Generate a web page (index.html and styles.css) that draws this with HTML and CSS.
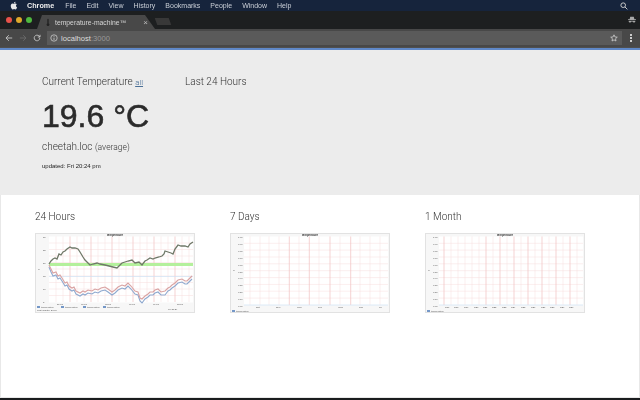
FILE: index.html
```html
<!DOCTYPE html>
<html lang="en">
<head>
    <meta charset="UTF-8">
    <title>temperature-machine™</title>
    <link rel="stylesheet" href="styles.css">
</head>
<body>
<div class="menubar">
    <svg class="apple" viewBox="0 0 14 16"><path d="M10.6 8.5c0-1.700 1.400-2.500 1.500-2.600-.8-1.200-2.100-1.300-2.500-1.400-1.100-.1-2.100.6-2.600.6-.6 0-1.400-.6-2.300-.6C3.500 4.500 2.400 5.200 1.800 6.200.6 8.400 1.500 11.600 2.700 13.300c.6.800 1.300 1.800 2.200 1.700.9 0 1.200-.6 2.300-.6s1.400.6 2.300.5c1 0 1.600-.8 2.100-1.700.7-1 1-1.900 1-2-.1 0-2-.8-2-2.700zM8.900 3.400c.5-.6.800-1.400.7-2.200-.7 0-1.500.5-2 1-.4.500-.8 1.300-.7 2.100.8.100 1.500-.4 2-.9z"/></svg>
    <b class="menu-app">Chrome</b>
    <span>File</span>
    <span>Edit</span>
    <span>View</span>
    <span>History</span>
    <span>Bookmarks</span>
    <span>People</span>
    <span>Window</span>
    <span>Help</span>
    <svg class="search-icon" viewBox="0 0 10 10"><circle cx="4" cy="4" r="2.900"/><path d="M6.200 6.200L9.200 9.200"/></svg>
</div>
<div class="tabstrip">
    <div class="lights">
        <i class="light red"></i>
        <i class="light yellow"></i>
        <i class="light green"></i>
    </div>
    <div class="tab">
        <svg class="favicon" viewBox="0 0 6 12"><path d="M2 1.500a1 1 0 0 1 2 0V7.500a2 2 0 1 1-2 0z"/></svg>
        <span class="tab-title">temperature-machine™</span>
        <span class="tab-close">×</span>
    </div>
    <div class="newtab"></div>
    <svg class="incognito" viewBox="0 0 10 10"><path d="M2.800 1h4.400l.8 3H10v1H0V4h2zM.8 6h8.400v.6a1.800 1.800 0 0 1-3.500.4H4.300a1.800 1.800 0 0 1-3.500-.4z"/></svg>
</div>
<div class="toolbar">
    <svg class="nav-icon" viewBox="0 0 10 10"><path d="M9 5H1.500M4.800 1.500L1.200 5l3.600 3.500"/></svg>
    <svg class="nav-icon dim" viewBox="0 0 10 10"><path d="M1 5h7.500M5.200 1.500L8.800 5 5.200 8.500"/></svg>
    <svg class="nav-icon" viewBox="0 0 10 10"><path d="M8.500 5a3.500 3.500 0 1 1-1-2.500L8.800 3.800M8.800 1v2.800H6"/></svg>
    <div class="omnibox">
        <svg class="info-icon" viewBox="0 0 10 10"><circle cx="5" cy="5" r="4"/><path d="M5 4.500V7.500M5 2.500v1"/></svg>
        <span class="url">localhost<span class="url-port">:3000</span></span>
        <svg class="star" viewBox="0 0 10 10"><path d="M5 1l1.200 2.700 2.900.3-2.200 1.900.6 2.900L5 7.300 2.500 8.800l.6-2.900L.9 4l2.900-.3z"/></svg>
    </div>
    <div class="dots"><i></i><i></i><i></i></div>
</div>
<div class="page">
    <section class="hero">
        <div class="hero-current">
            <h3 class="hero-label">Current Temperature <a class="all-link" href="#">all</a></h3>
            <div class="temperature">19.6 °C</div>
            <div class="host">cheetah.loc <small>(average)</small></div>
            <div class="updated">updated: Fri 20:24 pm</div>
        </div>
        <h3 class="hero-label">Last 24 Hours</h3>
    </section>
    <section class="charts">
        <div class="chart-col">
            <h3 class="chart-title">24 Hours</h3>
            <svg class="chart" viewBox="0 0 160 80">
                <rect class="plot" x="14" y="3.500" width="144" height="66"/>
                <path class="grid" d="M14 10H158M14 16.500H158M14 23H158M14 29.500H158M14 36H158M14 43H158M14 49.500H158M14 56H158M14 62.500H158M21 3.500V69M28 3.500V69M42 3.500V69M49 3.500V69M63 3.500V69M70 3.500V69M84 3.500V69M91 3.500V69M105 3.500V69M112 3.500V69M126 3.500V69M133 3.500V69M147 3.500V69M154 3.500V69"/>
                <path class="grid-major" d="M35 3.500V69M56 3.500V69M77 3.500V69M98 3.500V69M119 3.500V69M140 3.500V69"/>
                <rect class="band" x="14" y="30" width="144" height="3"/>
                <path class="zero" d="M14 43.500H158"/>
                <polyline class="line-blue" points="14,34 16,39 18,43 21,42 23,46 25,45 27,48 30,53 32,52 34,56 37,58 39,57 41,61 45,63 48,61 50,62 53,60 57,61 60,59 63,60 66,58 70,57 73,59 77,62 80,60 83,57 87,55 90,56 93,53 96,56 100,61 103,62 105,68 107,70 110,66 113,64 115,62 118,62 120,60 123,59 126,62 130,62 133,58 135,57 137,55 140,53 143,50 147,49 150,51 152,51 155,48 157,46"/>
                <polyline class="line-red" points="14,32 16,36 18,40 21,39 23,43 25,42 27,45 30,50 32,49 34,53 37,55 39,54 41,58 45,60 48,58 50,59 53,57 57,58 60,56 63,57 66,55 70,54 73,56 77,59 80,57 83,54 87,52 90,53 93,50 96,53 100,58 103,59 105,65 107,66 110,63 113,61 115,59 118,59 120,57 123,56 126,59 130,58 133,55 135,54 137,52 140,50 143,47 147,46 150,48 152,48 155,45 157,43"/>
                <polyline class="line-dark" points="14,31 16,28 18,26 20,25 22,26 24,21 26,22 28,19 30,18 32,16 35,14 37,15 40,15 43,16 45,19 48,24 50,27 53,30 55,32 58,31 62,30 65,31 70,32 74,33 78,34 82,35 85,32 87,30 90,29 93,28 97,27 100,30 104,29 107,32 110,28 112,27 115,25 118,26 120,25 124,24 127,23 129,21 130,18 133,19 136,20 138,21 140,16 143,12 146,13 150,13 153,14 155,11 158,9"/>
                <text class="chart-name" x="80" y="2.800">temperature</text>
                <text class="tick" x="2" y="37">°C</text>
                <text class="tick" x="8" y="5">30</text>
                <text class="tick" x="8" y="18">25</text>
                <text class="tick" x="8" y="31">20</text>
                <text class="tick" x="8" y="44">15</text>
                <text class="tick" x="8" y="57">10</text>
                <text class="tick" x="8" y="70">5</text>
                <text class="tick" x="22" y="72">21:00</text>
                <text class="tick" x="46" y="72">00:00</text>
                <text class="tick" x="70" y="72">03:00</text>
                <text class="tick" x="94" y="72">06:00</text>
                <text class="tick" x="118" y="72">09:00</text>
                <text class="tick" x="142" y="72">12:00</text>
                <path class="legend" d="M2 74h3M26 74h3M48 74h3M68 74h3"/>
                <text class="tick" x="6" y="75">temperature</text>
                <text class="tick" x="30" y="75">temperature</text>
                <text class="tick" x="52" y="75">temperature</text>
                <text class="tick" x="72" y="75">temperature</text>
                <text class="tick" x="2" y="78">Last update: 20:24</text>
                <text class="tick" x="133" y="77">Fri 20:24</text>
            </svg>
        </div>
        <div class="chart-col">
            <h3 class="chart-title">7 Days</h3>
            <svg class="chart" viewBox="0 0 160 80">
                <rect class="plot" x="14" y="3.500" width="144" height="68.500"/>
                <path class="grid" d="M14 10.300H158M14 17.100H158M14 24H158M14 30.800H158M14 37.700H158M14 44.600H158M14 51.400H158M14 58.200H158M14 65.100H158M20 3.500V72M30 3.500V72M39 3.500V72M49 3.500V72M69 3.500V72M89 3.500V72M110 3.500V72M130 3.500V72M140 3.500V72M150 3.500V72"/>
                <path class="grid-major" d="M59.300 3.500V72M79.300 3.500V72M100 3.500V72M120.700 3.500V72"/>
                <path class="zero" d="M14 72H158"/>
                <text class="chart-name" x="80" y="2.800">temperature</text>
                <text class="tick" x="2" y="38">°C</text>
                <text class="tick" x="8" y="5.300">1.00</text>
                <text class="tick" x="8" y="12">0.90</text>
                <text class="tick" x="8" y="19">0.80</text>
                <text class="tick" x="8" y="25.800">0.70</text>
                <text class="tick" x="8" y="32.700">0.60</text>
                <text class="tick" x="8" y="39.500">0.50</text>
                <text class="tick" x="8" y="46.400">0.40</text>
                <text class="tick" x="8" y="53.200">0.30</text>
                <text class="tick" x="8" y="60">0.20</text>
                <text class="tick" x="8" y="67">0.10</text>
                <text class="tick" x="8" y="73.500">0.00</text>
                <text class="tick" x="26" y="75">Sat</text>
                <text class="tick" x="46" y="75">Sun</text>
                <text class="tick" x="67" y="75">Mon</text>
                <text class="tick" x="88" y="75">Tue</text>
                <text class="tick" x="108" y="75">Wed</text>
                <text class="tick" x="129" y="75">Thu</text>
                <text class="tick" x="149" y="75">Fri</text>
                <path class="legend" d="M2 78h3"/>
                <text class="tick" x="6" y="79">temperature</text>
            </svg>
        </div>
        <div class="chart-col">
            <h3 class="chart-title">1 Month</h3>
            <svg class="chart" viewBox="0 0 160 80">
                <rect class="plot" x="14" y="3.500" width="144" height="68.500"/>
                <path class="grid" d="M14 10.300H158M14 17.100H158M14 24H158M14 30.800H158M14 37.700H158M14 44.600H158M14 51.400H158M14 58.200H158M14 65.100H158M26 3.500V72M33 3.500V72M40 3.500V72M47 3.500V72M54 3.500V72M68 3.500V72M82 3.500V72M96 3.500V72M110 3.500V72M124 3.500V72M138 3.500V72M152 3.500V72"/>
                <path class="grid-major" d="M19 3.500V72M61 3.500V72M75 3.500V72M89 3.500V72M103 3.500V72M117 3.500V72M131 3.500V72M145 3.500V72"/>
                <path class="zero" d="M14 72H158"/>
                <text class="chart-name" x="80" y="2.800">temperature</text>
                <text class="tick" x="2" y="38">°C</text>
                <text class="tick" x="8" y="5.300">1.00</text>
                <text class="tick" x="8" y="12">0.90</text>
                <text class="tick" x="8" y="19">0.80</text>
                <text class="tick" x="8" y="25.800">0.70</text>
                <text class="tick" x="8" y="32.700">0.60</text>
                <text class="tick" x="8" y="39.500">0.50</text>
                <text class="tick" x="8" y="46.400">0.40</text>
                <text class="tick" x="8" y="53.200">0.30</text>
                <text class="tick" x="8" y="60">0.20</text>
                <text class="tick" x="8" y="67">0.10</text>
                <text class="tick" x="8" y="73.500">0.00</text>
                <text class="tick" x="20" y="75">w17</text>
                <text class="tick" x="29" y="75">w18</text>
                <text class="tick" x="39" y="75">w19</text>
                <text class="tick" x="49" y="75">w20</text>
                <text class="tick" x="58" y="75">w21</text>
                <text class="tick" x="67" y="75">w22</text>
                <text class="tick" x="77" y="75">w23</text>
                <text class="tick" x="86" y="75">w24</text>
                <text class="tick" x="96" y="75">w25</text>
                <text class="tick" x="106" y="75">w26</text>
                <text class="tick" x="116" y="75">w27</text>
                <text class="tick" x="125" y="75">w28</text>
                <text class="tick" x="135" y="75">w29</text>
                <text class="tick" x="144" y="75">w30</text>
                <path class="legend" d="M2 78h3"/>
                <text class="tick" x="6" y="79">temperature</text>
            </svg>
        </div>
    </section>
</div>
<div class="dock-edge"></div>
</body>
</html>
```

FILE: styles.css
```css
html, body {
    margin: 0;
    padding: 0;
    height: 100%;
    overflow: hidden;
}
body {
    display: flex;
    flex-direction: column;
    font-family: "Liberation Sans", Arial, sans-serif;
    background-color: #fff;
}

/* mac menu bar */
.menubar {
    height: 11px;
    flex: none;
    display: flex;
    align-items: center;
    gap: 10px;
    padding-left: 10px;
    background-color: #16243c;
    color: #c9ced6;
    font-size: 7px;
    filter: blur(0.25px);
}
.apple {
    width: 8px;
    height: 9px;
    fill: #e8e8e8;
}
.menu-app {
    color: #eee;
    font-size: 7.200px;
    margin-left: -1px;
    margin-right: 1px;
}
.search-icon {
    width: 8px;
    height: 8px;
    margin-left: auto;
    margin-right: 12px;
    fill: none;
    stroke: #ccc;
    stroke-width: 1.200;
}

/* chrome window */
.tabstrip {
    height: 18px;
    flex: none;
    display: flex;
    align-items: flex-end;
    background-color: #1d1f20;
}
.lights {
    display: flex;
    gap: 4px;
    align-self: center;
    padding-left: 6px;
    width: 31px;
}
.light {
    width: 6px;
    height: 6px;
    border-radius: 50%;
}
.red { background-color: #e9524a; }
.yellow { background-color: #e0a92b; }
.green { background-color: #4fb93f; }
.tab {
    width: 118px;
    height: 14px;
    display: flex;
    align-items: center;
    padding: 0 5px 0 9px;
    box-sizing: border-box;
    background-color: #484848;
    clip-path: polygon(0 100%, 5px 0, 108px 0, 118px 100%);
    color: #d4d4d4;
    font-size: 6.800px;
    filter: blur(0.2px);
}
.favicon {
    width: 4px;
    height: 9px;
    fill: #222;
    margin-right: 5px;
    flex: none;
}
.tab-title {
    flex: 1;
}
.tab-close {
    color: #bbb;
    font-size: 8px;
    margin-right: 2px;
}
.newtab {
    width: 14px;
    height: 7px;
    margin: 0 0 4px 1px;
    background-color: #383838;
    transform: skewX(20deg);
}
.incognito {
    width: 8px;
    height: 8px;
    margin-left: auto;
    margin-right: 4px;
    margin-bottom: 5px;
    fill: #a8a8a8;
}
.toolbar {
    height: 19px;
    flex: none;
    display: flex;
    align-items: center;
    gap: 6px;
    padding-left: 5px;
    box-sizing: border-box;
    background-color: #484848;
    border-bottom: 1px solid #4f4f4f;
}
.nav-icon {
    width: 8px;
    height: 8px;
    flex: none;
    fill: none;
    stroke: #c8c8c8;
    stroke-width: 1.100;
}
.nav-icon.dim {
    stroke: #6b6b6b;
}
.omnibox {
    width: 575px;
    height: 14px;
    display: flex;
    align-items: center;
    gap: 3px;
    padding: 0 4px 0 3px;
    box-sizing: border-box;
    background-color: #5a5a5a;
    color: #ddd;
    font-size: 7.600px;
}
.info-icon {
    width: 8px;
    height: 8px;
    fill: none;
    stroke: #ccc;
}
.url-port {
    color: #999;
}
.star {
    width: 8px;
    height: 8px;
    margin-left: auto;
    fill: none;
    stroke: #d0d0d0;
}
.dots {
    display: flex;
    flex-direction: column;
    gap: 1px;
    margin-left: 2px;
}
.dots i {
    width: 2px;
    height: 2px;
    background-color: #ccc;
}

/* the page inside the browser */
.page {
    flex: 1;
    display: flex;
    flex-direction: column;
    border-top: 2px solid #5f88c8;
    background-color: #fff;
    filter: blur(0.35px);
}
.hero {
    height: 145px;
    flex: none;
    display: flex;
    padding: 25px 0 0 42px;
    box-sizing: border-box;
    background-color: #ececec;
}
.hero-current {
    width: 143px;
}
.hero-label {
    margin: 0;
    font-family: Roboto, "Liberation Sans", sans-serif;
    font-size: 10px;
    font-weight: 300;
    line-height: 14px;
    color: #333;
}
.all-link {
    font-size: 8px;
    color: #4a6f96;
}
.temperature {
    margin-top: 7px;
    font-size: 32px;
    line-height: 38px;
    color: #2b2b2b;
    -webkit-text-stroke: 0.6px #2b2b2b;
}
.host {
    margin-top: 5px;
    font-family: Roboto, "Liberation Sans", sans-serif;
    font-size: 10px;
    font-weight: 300;
    line-height: 14px;
    color: #333;
}
.host small {
    font-size: 8.500px;
}
.updated {
    margin-top: 8px;
    font-size: 6px;
    line-height: 8px;
    color: #222;
}
.charts {
    flex: 1;
    display: flex;
    padding: 15px 0 0 34px;
    border-left: 1px solid #e8e8e8;
    border-right: 1px solid #e8e8e8;
    border-bottom: 1px solid #e8e8e8;
}
.chart-col {
    width: 195px;
}
.chart-title {
    margin: 0 0 9px;
    font-family: Roboto, "Liberation Sans", sans-serif;
    font-size: 10px;
    font-weight: 300;
    line-height: 14px;
    color: #333;
}
.chart {
    display: block;
    width: 160px;
    height: 80px;
    background-color: #f7f7f7;
    outline: 1px solid #e2e2e2;
    outline-offset: -1px;
}
.plot { fill: #fff; }
.grid {
    fill: none;
    stroke: #f6dcdc;
    stroke-width: 0.500;
}
.grid-major {
    fill: none;
    stroke: #f0c0c0;
    stroke-width: 0.700;
}
.band { fill: #b4f09c; }
.zero {
    fill: none;
    stroke: #cfe3f5;
    stroke-width: 0.700;
}
.line-dark, .line-red, .line-blue {
    fill: none;
    stroke-width: 1.100;
}
.line-dark {
    stroke: #6f7868;
    stroke-width: 1.300;
}
.line-red { stroke: #d9a3a3; }
.line-blue { stroke: #8fa9cf; }
.chart-name {
    font-size: 2.800px;
    font-weight: bold;
    text-anchor: middle;
    fill: #333;
}
.tick {
    font-size: 2.400px;
    fill: #555;
}
.legend {
    fill: none;
    stroke: #4a78b8;
    stroke-width: 1.500;
}
.dock-edge {
    height: 2px;
    flex: none;
    background-color: #1a1c1e;
}
```
